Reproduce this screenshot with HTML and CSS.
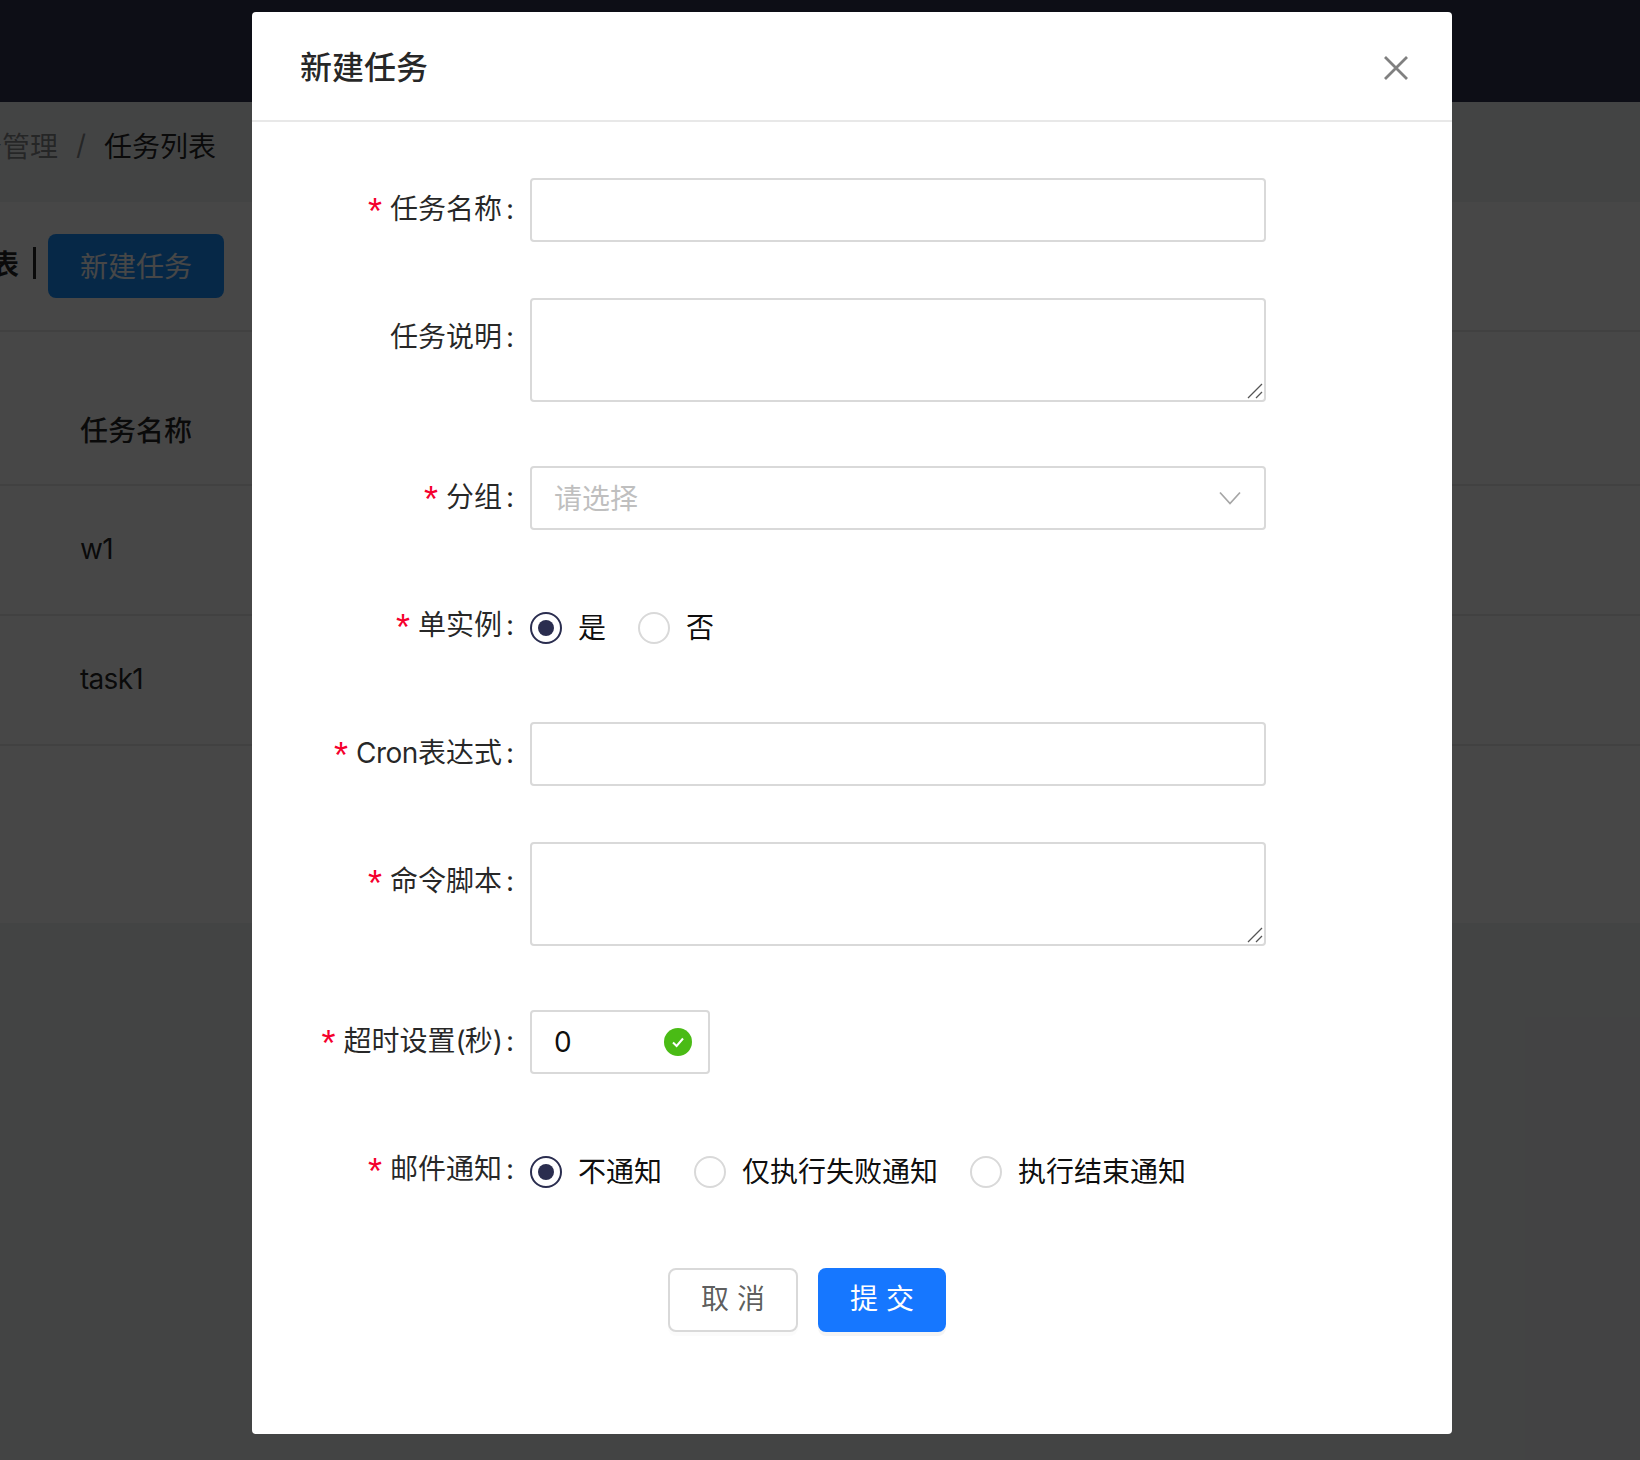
FILE: index.html
```html
<!DOCTYPE html>
<html lang="zh-CN">
<head>
  <meta charset="UTF-8" />
  <title>新建任务</title>
  <link rel="stylesheet" href="styles.css">
</head>
<body>
  <header class="topbar"></header>

  <div class="breadcrumb">
    <span class="crumb-link">任务管理</span>
    <span class="crumb-sep">/</span>
    <span class="crumb-current">任务列表</span>
  </div>

  <main class="card">
    <div class="card-head">
      <span class="card-title">任务列表</span>
      <span class="card-bar"></span>
      <button class="btn-new">新建任务</button>
    </div>
    <div class="table">
      <div class="table-head">任务名称</div>
      <div class="table-row">w1</div>
      <div class="table-row">task1</div>
    </div>
  </main>

  <div class="mask"></div>

  <section class="modal">
    <div class="modal-head">
      <h2>新建任务</h2>
      <svg class="modal-close" width="24" height="24" viewBox="0 0 24 24">
        <path d="M1 1 L23 23 M23 1 L1 23" stroke="#808080" stroke-width="2.8" fill="none"/>
      </svg>
    </div>

    <form class="form">
      <div class="row row-input">
        <label class="label req">任务名称</label>
        <div class="field"><div class="input"></div></div>
      </div>

      <div class="row row-area">
        <label class="label">任务说明</label>
        <div class="field">
          <div class="input textarea">
            <svg class="grip" width="16" height="16" viewBox="0 0 16 16">
              <path d="M1 15 L15 1 M9 15 L15 9" stroke="#555" stroke-width="1.3" fill="none"/>
            </svg>
          </div>
        </div>
      </div>

      <div class="row row-input">
        <label class="label req">分组</label>
        <div class="field">
          <div class="input select">
            <span class="placeholder">请选择</span>
            <svg width="22" height="14" viewBox="0 0 22 14">
              <path d="M1 1.5 L11 12.5 L21 1.5" stroke="#a6a6a6" stroke-width="1.7" fill="none"/>
            </svg>
          </div>
        </div>
      </div>

      <div class="row row-radio">
        <label class="label req">单实例</label>
        <div class="field radios">
          <span class="radio checked"></span><span class="radio-text">是</span>
          <span class="radio"></span><span class="radio-text">否</span>
        </div>
      </div>

      <div class="row row-input">
        <label class="label req"><span class="latin">Cron</span>表达式</label>
        <div class="field"><div class="input"></div></div>
      </div>

      <div class="row row-area">
        <label class="label req">命令脚本</label>
        <div class="field">
          <div class="input textarea">
            <svg class="grip" width="16" height="16" viewBox="0 0 16 16">
              <path d="M1 15 L15 1 M9 15 L15 9" stroke="#555" stroke-width="1.3" fill="none"/>
            </svg>
          </div>
        </div>
      </div>

      <div class="row row-input">
        <label class="label req">超时设置<span class="paren">(</span>秒<span class="paren">)</span></label>
        <div class="field">
          <div class="input number">
            <span>0</span>
            <svg width="28" height="28" viewBox="0 0 28 28">
              <circle cx="14" cy="14" r="14" fill="#4abb15"/>
              <path d="M9 14.5 L12.6 18 L19 10.5" stroke="#fff" stroke-width="2" fill="none"/>
            </svg>
          </div>
        </div>
      </div>

      <div class="row row-radio">
        <label class="label req">邮件通知</label>
        <div class="field radios">
          <span class="radio checked"></span><span class="radio-text">不通知</span>
          <span class="radio"></span><span class="radio-text">仅执行失败通知</span>
          <span class="radio"></span><span class="radio-text">执行结束通知</span>
        </div>
      </div>

      <div class="actions">
        <button type="button" class="btn">取 消</button>
        <button type="button" class="btn btn-primary">提 交</button>
      </div>
    </form>
  </section>
</body>
</html>
```

FILE: styles.css
```css
* {
  margin: 0;
  padding: 0;
  box-sizing: border-box;
}

html,
body {
  height: 100%;
  overflow: hidden;
}

body {
  position: relative;
  background-color: #f0f2f5;
  font-family: Inter, "Noto Sans CJK SC", "Noto Sans", sans-serif;
  font-size: 28px;
  color: rgba(0, 0, 0, 0.85);
}

/* page behind the dialog */

.topbar {
  height: 102px;
  background-color: #31354f;
}

.breadcrumb {
  display: flex;
  align-items: center;
  height: 100px;
  padding-bottom: 14px;
  margin-left: -54px;
  white-space: nowrap;
}

.crumb-link {
  color: rgba(0, 0, 0, 0.45);
}

.crumb-sep {
  margin: 0 18px;
  color: rgba(0, 0, 0, 0.45);
}

.card {
  background-color: #fff;
  height: 721px;
}

.card-head {
  display: flex;
  align-items: center;
  height: 130px;
  margin-left: -93px;
  border-bottom: 2px solid #e8e8e8;
  white-space: nowrap;
}

.card-title {
  padding-bottom: 6px;
  font-weight: 700;
}

.card-bar {
  width: 3px;
  height: 32px;
  margin: -6px 12px 0 14px;
  background-color: rgba(0, 0, 0, 0.85);
}

.btn-new {
  width: 176px;
  height: 64px;
  padding-bottom: 2px;
  border: none;
  border-radius: 8px;
  background-color: #1890ff;
  color: #fff;
  font: inherit;
}

.table {
  padding-top: 44px;
}

.table-head {
  display: flex;
  align-items: center;
  height: 110px;
  padding: 0 0 2px 80px;
  font-weight: 500;
  border-bottom: 2px solid #e8e8e8;
}

.table-row {
  display: flex;
  align-items: center;
  height: 130px;
  padding: 0 0 2px 80px;
  letter-spacing: -0.7px;
  border-bottom: 2px solid #e8e8e8;
}

.mask {
  position: absolute;
  inset: 0;
  background-color: rgba(0, 0, 0, 0.72);
}

/* dialog */

.modal {
  position: absolute;
  left: 252px;
  top: 12px;
  width: 1200px;
  height: 1422px;
  background-color: #fff;
  border-radius: 4px;
}

.modal-head {
  position: relative;
  display: flex;
  align-items: center;
  height: 110px;
  padding: 0 48px 2px;
  border-bottom: 2px solid #e8e8e8;
}

.modal-head h2 {
  font-size: 32px;
  font-weight: 500;
}

.modal-close {
  position: absolute;
  right: 44px;
  top: 44px;
}

.form {
  padding-top: 56px;
}

.row {
  display: flex;
}

.row-input {
  margin-bottom: 56px;
}

.row-area {
  margin-bottom: 64px;
}

.row-radio {
  height: 74px;
  padding-top: 10px;
  margin-bottom: 62px;
}

.label {
  width: 262px;
  margin-right: 16px;
  height: 62px;
  line-height: 62px;
  text-align: right;
  white-space: nowrap;
}

.row-area .label {
  height: 78px;
  line-height: 78px;
}

.row-radio .label {
  height: 58px;
  line-height: 58px;
}

.label::after {
  content: ":";
  margin-left: 4px;
}

.latin {
  letter-spacing: -0.5px;
}

.paren {
  letter-spacing: -1px;
}

.req::before {
  content: "*";
  margin-right: 8px;
  font-family: "Liberation Sans", sans-serif;
  font-size: 36px;
  line-height: 1;
  vertical-align: -5px;
  color: #f5002d;
}

.field {
  width: 736px;
}

.input {
  position: relative;
  height: 64px;
  border: 2px solid #d9d9d9;
  border-radius: 4px;
}

.textarea {
  height: 104px;
}

.grip {
  position: absolute;
  right: 1px;
  bottom: 1px;
}

.select {
  display: flex;
  align-items: center;
  justify-content: space-between;
  padding: 0 23px 0 22px;
}

.placeholder {
  padding-bottom: 2px;
  color: #bfbfbf;
}

.number {
  display: flex;
  align-items: center;
  justify-content: space-between;
  width: 180px;
  padding: 0 16px 0 22px;
  color: rgba(0, 0, 0, 0.95);
}

.radios {
  display: flex;
  align-items: center;
}

.radio {
  position: relative;
  width: 32px;
  height: 32px;
  border: 2px solid #d9d9d9;
  border-radius: 50%;
  background-color: #fff;
}

.radio.checked {
  border-color: #2a2d4f;
}

.radio.checked::after {
  content: "";
  position: absolute;
  left: 6px;
  top: 6px;
  width: 16px;
  height: 16px;
  border-radius: 50%;
  background-color: #2a2d4f;
}

.radio-text {
  margin: 0 32px 0 16px;
  padding-bottom: 5px;
  color: rgba(0, 0, 0, 0.95);
}

.actions {
  display: flex;
  justify-content: center;
  gap: 20px;
  padding: 2px 90px 0 0;
}

.btn {
  width: 130px;
  height: 64px;
  padding-bottom: 6px;
  border: 2px solid #d9d9d9;
  border-radius: 8px;
  background-color: #fff;
  color: rgba(0, 0, 0, 0.65);
  font: inherit;
  box-shadow: 0 4px 0 rgba(0, 0, 0, 0.015);
}

.btn-primary {
  width: 128px;
  border-color: #1677ff;
  background-color: #1677ff;
  color: #fff;
  box-shadow: 0 4px 0 rgba(0, 0, 0, 0.045);
}
```
